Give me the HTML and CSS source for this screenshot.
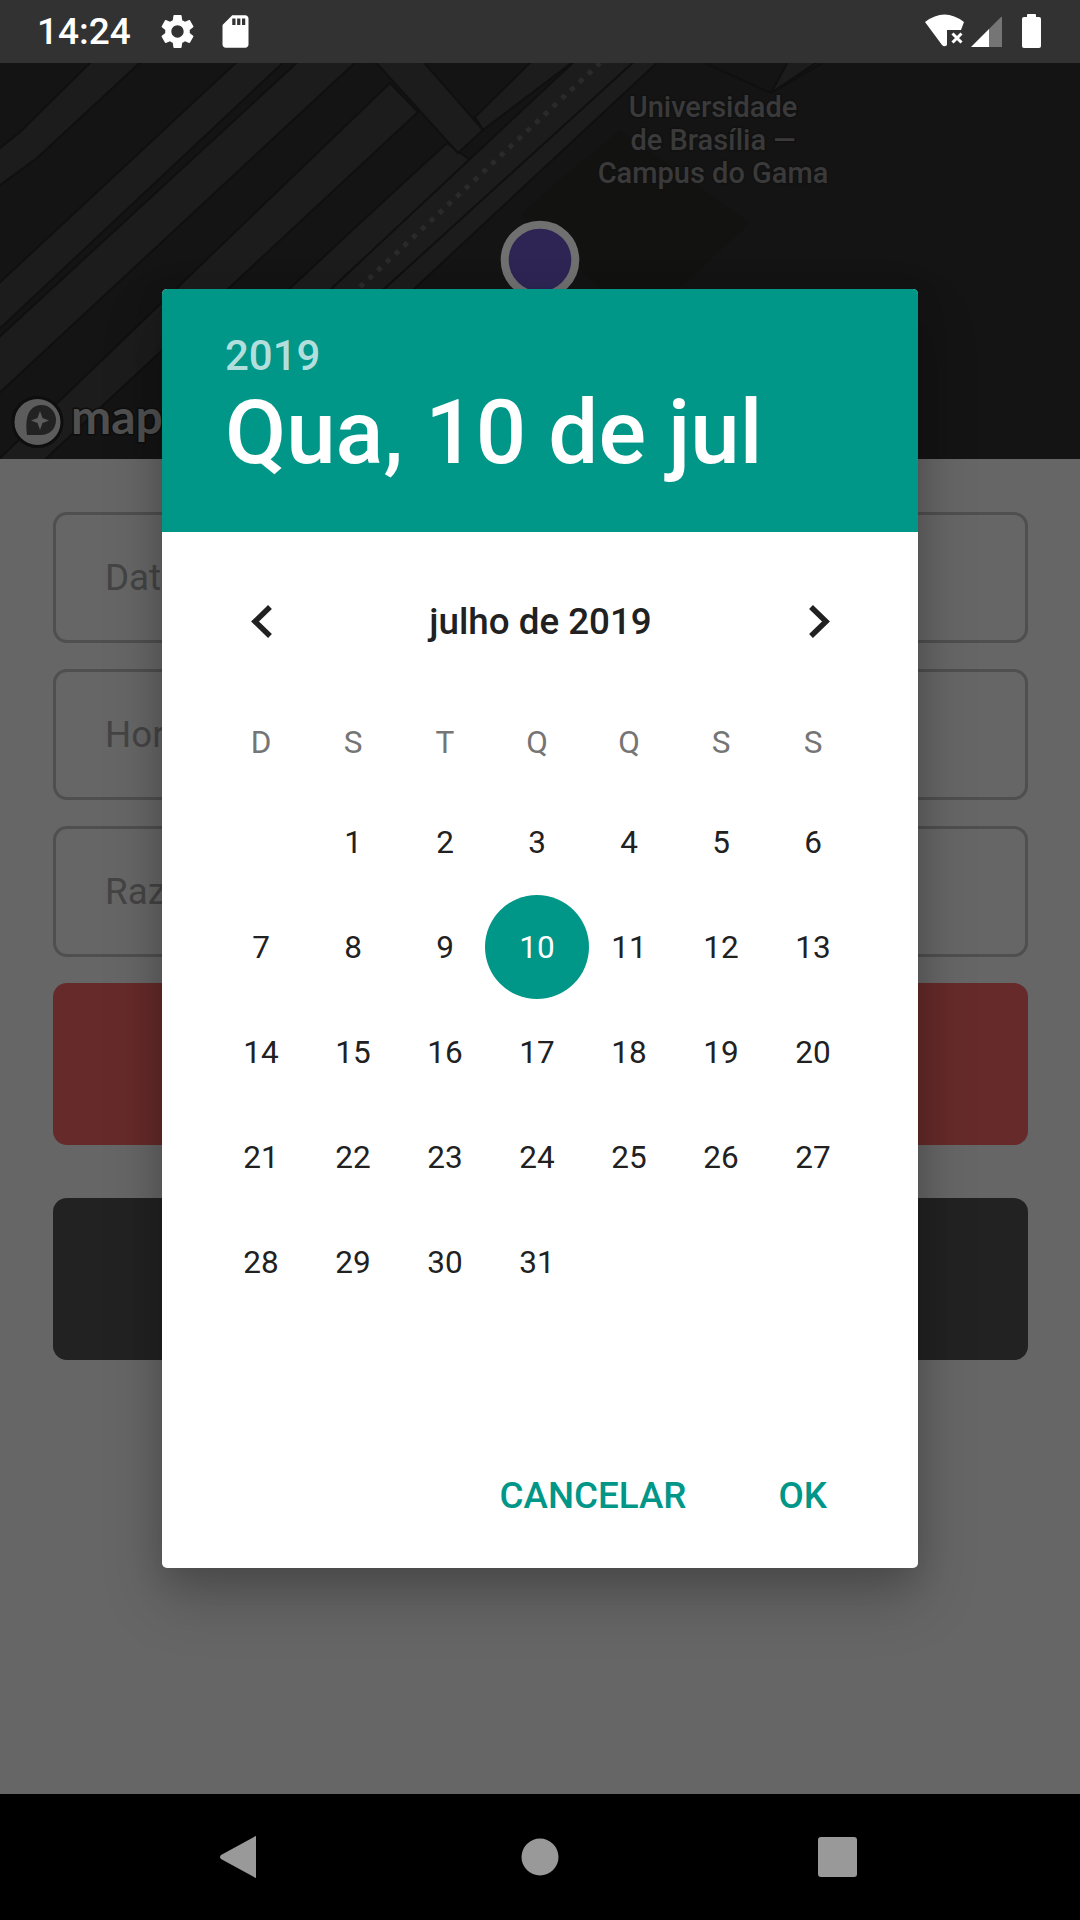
FILE: index.html
```html
<!DOCTYPE html>
<html lang="pt-BR">
<head>
<meta charset="utf-8">
<title>Selecionar data</title>
<link rel="stylesheet" href="styles.css">
</head>
<body>
<div class="screen">
  <header class="status">
    <span class="clock">14:24</span>
    <svg class="ic-gear" viewBox="0 0 24 24"><path d="M19.14 12.94c.04-.3.06-.61.06-.94 0-.32-.02-.64-.07-.94l2.03-1.58c.18-.14.23-.41.12-.61l-1.92-3.32c-.12-.22-.37-.29-.59-.22l-2.39.96c-.5-.38-1.03-.7-1.62-.94l-.36-2.54c-.04-.24-.24-.41-.48-.41h-3.84c-.24 0-.43.17-.47.41l-.36 2.54c-.59.24-1.13.57-1.62.94l-2.39-.96c-.22-.08-.47 0-.59.22L2.74 8.87c-.12.21-.08.47.12.61l2.03 1.58c-.05.3-.09.63-.09.94s.02.64.07.94l-2.03 1.58c-.18.14-.23.41-.12.61l1.92 3.32c.12.22.37.29.59.22l2.39-.96c.5.38 1.03.7 1.62.94l.36 2.54c.05.24.24.41.48.41h3.84c.24 0 .44-.17.47-.41l.36-2.54c.59-.24 1.13-.56 1.62-.94l2.39.96c.22.08.47 0 .59-.22l1.92-3.32c.12-.22.07-.47-.12-.61l-2.01-1.58zM12 15.6c-1.98 0-3.6-1.62-3.6-3.6s1.62-3.6 3.6-3.6 3.6 1.62 3.6 3.6-1.62 3.6-3.6 3.6z"/></svg>
    <svg class="ic-sd" viewBox="0 0 24 24"><path d="M18 2h-8L4.02 8 4 20c0 1.1.9 2 2 2h12c1.1 0 2-.9 2-2V4c0-1.1-.9-2-2-2zm-6 6h-2V4h2v4zm3 0h-2V4h2v4zm3 0h-2V4h2v4z"/></svg>
    <span class="status-gap"></span>
    <svg class="ic-sys" viewBox="920 10 130 50">
      <path class="w" d="M925 22 Q944.500 7 964 22 L961 30 H947 V45 Q944.500 47.500 942 45 Z"/>
      <path class="x" d="M952.500 33.500 L961.500 42.500 M961.500 33.500 L952.500 42.500"/>
      <path class="w" d="M971 47 L989 29 V47 Z"/>
      <path class="g" d="M989 29 L1001 17 Q1002 16 1002 18 V47 H989 Z"/>
      <path class="w" d="M1027 17 V15 Q1027 14 1028 14 H1035 Q1036 14 1036 15 V17 H1039 Q1041 17 1041 19 V46 Q1041 48 1039 48 H1024 Q1022 48 1022 46 V19 Q1022 17 1024 17 Z"/>
    </svg>
  </header>

  <section class="map">
    <svg class="map-art" viewBox="0 63 1080 396">
      <g class="roads">
        <path d="M95 58 H145 L37 158 L-5 189 V152 L20 132 Z"/>
        <path d="M241 58 H288 L-5 333 V287 Z"/>
        <path d="M302 58 H360 L-5 397 V341 Z"/>
        <path d="M390 83 L418 112 L40 464 H-5 V463 Z"/>
        <path d="M447 143 L360 223 L240 335 V340 H290 L333 290 L360 263 L470 160 Z"/>
        <path d="M578 58 H638 L390 290 L300 375 H240 L330 290 Z"/>
        <path d="M638 58 H662 L413 290 L320 375 H300 L383 290 Z"/>
        <path d="M475 117 L535 58 H578 L483 130 Z"/>
        <path d="M372 58 H420 L483 130 L458 153 Z"/>
        <path d="M771 93 L823 58 H790 Z"/>
      </g>
      <path class="building" d="M545 192 L620 130 L750 223 L640 325 L520 215 Z"/>
      <path class="edge" d="M705 63 L771 93 L823 63"/>
      <path class="dots" d="M360 287 L600 63"/>
      <g class="label">
        <text x="713" y="117">Universidade</text>
        <text x="713" y="150">de Brasília —</text>
        <text x="713" y="183">Campus do Gama</text>
      </g>
      <circle class="ring" cx="540" cy="260" r="35.300"/>
      <circle class="logo-disc" cx="37.500" cy="422" r="24.500"/>
      <path class="logo-drop" d="M27 435 C25 420 27 406 41 405 C51 405 56 413 56 420 C56 430 48 435 41 435 Z"/>
      <path class="logo-star" d="M40 411 L42.500 418 L49 420.500 L42.500 423 L40 430 L37.500 423 L31 420.500 L37.500 418 Z"/>
      <text class="logo-word" x="71" y="434">mapbox</text>
    </svg>
  </section>

  <main class="form">
    <div class="field">Data</div>
    <div class="field">Hora</div>
    <div class="field">Razão</div>
    <div class="btn btn-red"></div>
    <div class="btn btn-dark"></div>
  </main>

  <nav class="navbar">
    <svg class="nav-art" viewBox="0 0 1080 126">
      <path d="M256 43 Q256 41 254 43 L221 61 Q219 63 221 65 L254 83 Q256 85 256 83 Z" class="nav-back"/>
      <circle cx="540" cy="63" r="18.500"/>
      <rect x="818" y="43" width="39" height="40" rx="3"/>
    </svg>
  </nav>

  <div class="dialog">
    <div class="dlg-head">
      <div class="dlg-year">2019</div>
      <div class="dlg-date">Qua, 10 de jul</div>
    </div>
    <div class="month-row">
      <svg class="chev" viewBox="0 0 40 40"><path d="M26 6 L11 20.500 L26 35"/></svg>
      <span class="month-name">julho de 2019</span>
      <svg class="chev" viewBox="0 0 40 40"><path d="M14 6 L29 20.500 L14 35"/></svg>
    </div>
    <div class="week">
      <span>D</span><span>S</span><span>T</span><span>Q</span><span>Q</span><span>S</span><span>S</span>
    </div>
    <div class="days">
      <span></span><span>1</span><span>2</span><span>3</span><span>4</span><span>5</span><span>6</span>
      <span>7</span><span>8</span><span>9</span><span class="sel">10</span><span>11</span><span>12</span><span>13</span>
      <span>14</span><span>15</span><span>16</span><span>17</span><span>18</span><span>19</span><span>20</span>
      <span>21</span><span>22</span><span>23</span><span>24</span><span>25</span><span>26</span><span>27</span>
      <span>28</span><span>29</span><span>30</span><span>31</span>
    </div>
    <div class="actions">
      <span>CANCELAR</span>
      <span>OK</span>
    </div>
  </div>
</div>
</body>
</html>
```
FILE: styles.css
```css
* { box-sizing: border-box; }
html, body { margin: 0; padding: 0; }
body { width: 1080px; height: 1920px; overflow: hidden; font-family: Roboto, "Liberation Sans", sans-serif; background: #666; }

.screen { position: relative; width: 1080px; height: 1920px; display: flex; flex-direction: column; overflow: hidden; }

/* status bar */
.status { height: 63px; flex: none; background: #323232; display: flex; align-items: center; padding-left: 37px; }
.clock { color: #fff; font-size: 37px; font-weight: 500; width: 120px; line-height: 63px; }
.ic-gear { width: 41px; height: 41px; fill: #fff; margin-right: 18px; }
.ic-sd { width: 39px; height: 39px; fill: #fff; }
.status-gap { flex: 1; }
.ic-sys { width: 130px; height: 50px; margin-right: 30px; margin-top: 7px; }
.ic-sys .w { fill: #fff; }
.ic-sys .g { fill: #757575; }
.ic-sys .x { fill: none; stroke: #fff; stroke-width: 3px; }

/* map */
.map { height: 396px; flex: none; background: #141414; overflow: hidden; }
.map-art { display: block; width: 1080px; height: 396px; }
.roads path { fill: #1c1c1c; stroke: #101010; stroke-width: 2px; }
.building { fill: #121211; }
.edge { fill: none; stroke: #101010; stroke-width: 2px; }
.dots { fill: none; stroke: #2a2a2a; stroke-width: 5px; stroke-dasharray: 5 7; }
.label text { font-family: Roboto, sans-serif; font-size: 29px; font-weight: 500; fill: #3a3a3a; stroke: #111; stroke-width: 3px; paint-order: stroke; text-anchor: middle; }
.ring { fill: #2e2555; stroke: #707070; stroke-width: 8px; }
.logo-disc { fill: #5c5c5c; stroke: #0e0e0e; stroke-width: 3px; }
.logo-drop { fill: #222; }
.logo-star { fill: #5c5c5c; }
.logo-word { font-family: Lato, sans-serif; font-size: 48px; font-weight: 700; fill: #505050; stroke: #0e0e0e; stroke-width: 3px; paint-order: stroke; }

/* form behind the dialog */
.form { flex: 1; display: flex; flex-direction: column; padding: 53px 52px 0 53px; background: #666; }
.field { height: 131px; flex: none; margin-bottom: 26px; border: 3px solid #4f4f4f; border-radius: 14px; padding-left: 49px; display: flex; align-items: center; font-size: 36.750px; color: #444; }
.btn { flex: none; border-radius: 14px; }
.btn-red { height: 162px; background: #662a2a; margin-bottom: 53px; }
.btn-dark { height: 162px; background: #222; }

/* navigation bar */
.navbar { height: 126px; flex: none; background: #000; }
.nav-art { display: block; width: 1080px; height: 126px; fill: #999; }

/* date picker */
.dialog { position: absolute; left: 162px; top: 289px; width: 756px; height: 1279px; background: #fff; border-radius: 5px; box-shadow: 0 30px 60px rgba(0, 0, 0, .22), 0 10px 30px rgba(0, 0, 0, .12); display: flex; flex-direction: column; overflow: visible; }
.dlg-head { height: 243px; flex: none; background: #009688; border-radius: 5px 5px 0 0; padding: 42px 0 0 63px; color: #fff; font-weight: 500; }
.dlg-year { font-size: 42px; line-height: 50px; color: #b2dfdb; }
.dlg-date { font-size: 88.800px; line-height: 100px; margin-top: 2px; }
.month-row { height: 90px; margin-top: 44px; flex: none; display: flex; align-items: center; justify-content: space-between; padding: 0 81px 0 82px; }
.month-name { font-size: 36.750px; font-weight: 500; color: #212121; }
.chev { width: 40px; height: 40px; fill: none; stroke: #212121; stroke-width: 5.500px; }
.week, .days { display: grid; grid-template-columns: repeat(7, 92px); padding-left: 53px; text-align: center; }
.week { margin-top: 29px; grid-auto-rows: 95px; font-size: 31.500px; color: #757575; }
.days { grid-auto-rows: 105px; font-size: 31.500px; color: #212121; }
.week span, .days span { display: flex; align-items: center; justify-content: center; }
.days .sel { color: #fff; position: relative; z-index: 0; }
.days .sel::before { content: ""; position: absolute; z-index: -1; left: -6px; top: 0; width: 104px; height: 104px; border-radius: 50%; background: #009688; }
.actions { margin-top: auto; height: 93px; flex: none; display: flex; justify-content: flex-end; gap: 92px; padding: 0 91px 0 0; font-size: 36.750px; font-weight: 500; color: #009688; line-height: 42px; }
```
